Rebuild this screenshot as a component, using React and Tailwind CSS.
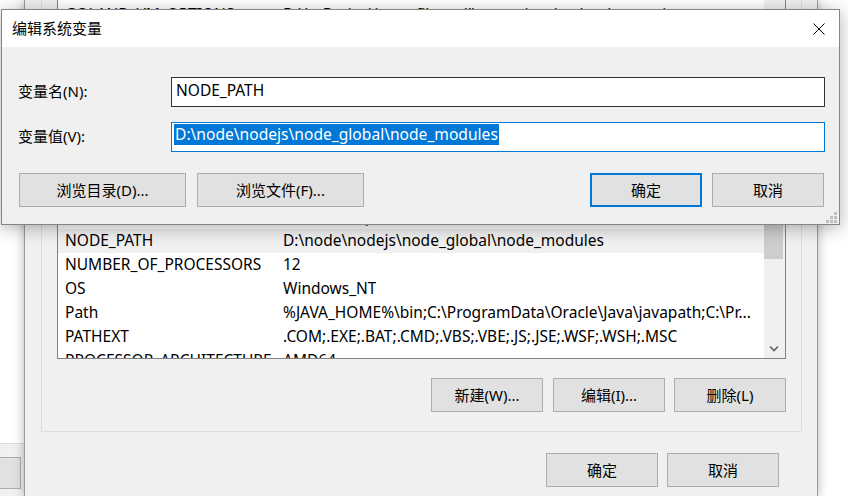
import React from 'react';

const rows = [
  ['GOLAND_VM_OPTIONS', 'D:\\JetBrains\\ja-netfilter-all\\vmoptions\\goland.vmoptions'],
  ['IDEA_VM_OPTIONS', 'D:\\JetBrains\\ja-netfilter-all\\vmoptions\\idea.vmoptions'],
  ['JAVA_HOME', 'C:\\Program Files\\Java\\jdk1.8.0_301'],
  ['JETBRAINSCLIENT_VM_OPTIONS', 'D:\\JetBrains\\ja-netfilter-all\\vmoptions\\jetbrainsclient.vmoptions'],
  ['JETBRAINS_CLIENT_VM_OPTIONS', 'D:\\JetBrains\\ja-netfilter-all\\vmoptions\\jetbrains_client.vmoptions'],
  ['JRE_HOME', 'C:\\Program Files\\Java\\jre1.8.0_301'],
  ['MAVEN_HOME', 'D:\\apache-maven-3.8.4'],
  ['MYSQL_HOME', 'D:\\mysql-8.0.27-winx64'],
  ['NODE_HOME', 'D:\\node\\nodejs'],
  ['NODE_OPTIONS', '--max-old-space-size=4096'],
  ['NODE_PATH', 'D:\\node\\nodejs\\node_global\\node_modules'],
  ['NUMBER_OF_PROCESSORS', '12'],
  ['OS', 'Windows_NT'],
  ['Path', '%JAVA_HOME%\\bin;C:\\ProgramData\\Oracle\\Java\\javapath;C:\\Pr...'],
  ['PATHEXT', '.COM;.EXE;.BAT;.CMD;.VBS;.VBE;.JS;.JSE;.WSF;.WSH;.MSC'],
  ['PROCESSOR_ARCHITECTURE', 'AMD64'],
  ['PROCESSOR_IDENTIFIER', 'Intel64 Family 6 Model 165 Stepping 2, GenuineIntel'],
];

function WinButton({ children, className = '', primary = false }) {
  return (
    <div
      className={`flex items-center justify-center bg-[#e1e1e1] text-black ${
        primary ? 'border-2 border-[#0078d7]' : 'border border-[#adadad]'
      } ${className}`}
    >
      {children}
    </div>
  );
}

function ResizeGrip() {
  return (
    <svg width="11" height="11" viewBox="0 0 11 11" className="absolute bottom-[1px] right-[2px]">
      <rect x="8" y="0" width="3" height="3" fill="#bfbfbf" />
      <rect x="4" y="4" width="3" height="3" fill="#bfbfbf" />
      <rect x="8" y="4" width="3" height="3" fill="#bfbfbf" />
      <rect x="0" y="8" width="3" height="3" fill="#bfbfbf" />
      <rect x="4" y="8" width="3" height="3" fill="#bfbfbf" />
      <rect x="8" y="8" width="3" height="3" fill="#bfbfbf" />
    </svg>
  );
}

function EditDialog() {
  return (
    <div className="absolute left-[1px] top-[9px] flex h-[216px] w-[839px] flex-col border border-[#858585] bg-[#f0f0f0] shadow-[0_3px_16px_rgba(0,0,0,0.3)]">
      <div className="flex h-[37px] items-center justify-between bg-white pl-[10px] pr-[14px] text-[15px]">
        <span>编辑系统变量</span>
        <svg width="12" height="12" viewBox="0 0 12 12">
          <path d="M0.5 0.5L11.5 11.5M11.5 0.5L0.5 11.5" stroke="#000" strokeWidth="1" fill="none" />
        </svg>
      </div>
      <div className="relative flex flex-1 flex-col pl-[16px] pr-[14px] pt-[30px] text-[15px]">
        <div className="flex h-[30px] items-center">
          <div className="w-[153px] pb-[1px]">变量名(N):</div>
          <div className="flex h-[30px] flex-1 items-center border border-[#333333] bg-white pb-[2px] pl-[4px] text-[15.5px]">
            NODE_PATH
          </div>
        </div>
        <div className="mt-[15px] flex h-[30px] items-center">
          <div className="w-[153px] pb-[1px]">变量值(V):</div>
          <div className="flex h-[30px] flex-1 items-start border border-[#0078d7] bg-white pl-[2px] pt-[1px] text-[15.6px]">
            <span className="bg-[#0078d7] px-[1px] leading-[21px] text-white">
              D:\node\nodejs\node_global\node_modules
            </span>
          </div>
        </div>
        <div className="mt-[21px] flex h-[34px] items-stretch">
          <WinButton className="ml-[1px] w-[167px]">浏览目录(D)...</WinButton>
          <WinButton className="ml-[11px] w-[167px]">浏览文件(F)...</WinButton>
          <div className="flex-1" />
          <WinButton primary className="w-[112px]">确定</WinButton>
          <WinButton className="ml-[10px] mr-[1px] w-[112px]">取消</WinButton>
        </div>
        <ResizeGrip />
      </div>
    </div>
  );
}

export default function App() {
  return (
    <div className="relative flex h-[496px] w-[848px] overflow-hidden bg-white font-['Noto_Sans','Noto_Sans_CJK_SC',sans-serif] text-black">
      {/* window behind, left */}
      <div className="flex w-[24px] flex-col">
        <div className="h-[443px]" />
        <div className="flex-1 border-t border-[#dadada] bg-[#f0f0f0] pt-[13px]">
          <div className="h-[32px] w-[21px] border-y border-r border-[#adadad] bg-[#e1e1e1]" />
        </div>
      </div>

      {/* 环境变量 dialog */}
      <div className="flex w-[794px] flex-col border-x border-[#9b9b9b] bg-[#f0f0f0] text-[15px] shadow-[0_0_10px_rgba(0,0,0,0.3)]">
        <div className="ml-[16px] mr-[15px] flex flex-col border-x border-b border-[#dcdcdc] px-[15px] pb-[19px]">
          <div className="flex h-[359px] border-x border-b border-[#828282] bg-white">
            <div className="flex min-w-0 flex-1 flex-col overflow-hidden">
              <div className="flex flex-col pt-[3px] text-[15.5px]">
                {rows.map(([name, value], i) => (
                  <div
                    key={name}
                    className={`flex h-[24px] shrink-0 items-center whitespace-nowrap pl-[7px] ${
                      name === 'NODE_PATH' ? 'bg-[#f0f0f0]' : ''
                    } ${i === 1 ? 'mt-[-14px]' : ''}`}
                  >
                    <span className="w-[218px] shrink-0 overflow-hidden">{name}</span>
                    <span className="overflow-hidden">{value}</span>
                  </div>
                ))}
              </div>
            </div>
            <div className="flex w-[21px] flex-col bg-[#f0f0f0]">
              <div className="flex-1" />
              <div className="mr-[2px] h-[109px] bg-[#cdcdcd]" />
              <div className="h-[79px]" />
              <div className="flex h-[20px] items-center justify-center pr-[2px]">
                <svg width="10" height="7" viewBox="0 0 10 7">
                  <path d="M1 1.5L5 5.5L9 1.5" stroke="#606060" strokeWidth="1.6" fill="none" />
                </svg>
              </div>
            </div>
          </div>
          <div className="mt-[19px] flex h-[34px] justify-end">
            <WinButton className="w-[112px]">新建(W)...</WinButton>
            <WinButton className="ml-[10px] w-[112px]">编辑(I)...</WinButton>
            <WinButton className="ml-[9px] w-[112px]">删除(L)</WinButton>
          </div>
        </div>
        <div className="mt-[21px] flex h-[34px] justify-end pr-[38px]">
          <WinButton className="w-[112px]">确定</WinButton>
          <WinButton className="ml-[9px] w-[112px]">取消</WinButton>
        </div>
      </div>

      {/* window behind, right */}
      <div className="flex-1" />

      <EditDialog />
    </div>
  );
}
